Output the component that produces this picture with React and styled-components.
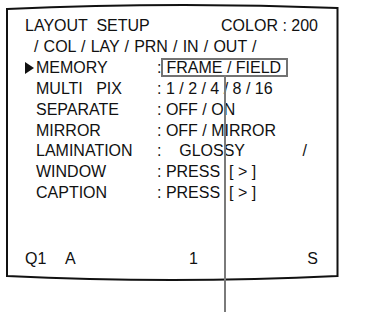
import React from 'react'
import styled, { createGlobalStyle } from 'styled-components'

const GlobalStyle = createGlobalStyle`
  html, body {
    margin: 0;
    padding: 0;
    background: #fff;
  }
`

const Page = styled.div`
  position: relative;
  width: 385px;
  height: 312px;
  overflow: hidden;
  box-sizing: border-box;
  padding: 16px 20px 0 25px;
  font-family: 'Liberation Sans', Arial, sans-serif;
  font-size: 16px;
  line-height: 20.9px;
  color: #111;
`

const Frame = styled.svg`
  position: absolute;
  left: 0;
  top: 0;
  width: 385px;
  height: 312px;
  pointer-events: none;
`

const Screen = styled.div`
  position: relative;
  width: 293px;
`

const Header = styled.div`
  display: flex;
  justify-content: space-between;
  white-space: pre;
`

const Tabs = styled.div`
  white-space: pre;
  padding-left: 9px;
  word-spacing: 0.7px;
`

const Row = styled.div`
  display: grid;
  grid-template-columns: 11px 121px 1fr;
  align-items: baseline;
  white-space: pre;
`

const Cursor = styled.span`
  align-self: center;
  width: 0;
  height: 0;
  border-top: 6px solid transparent;
  border-bottom: 6px solid transparent;
  border-left: 9px solid #111;
  visibility: ${p => (p.$on ? 'visible' : 'hidden')};
`

const Selected = styled.span`
  position: relative;
  display: inline-block;
  line-height: 15px;
  padding: 0 5px 0 3px;
  border: 2px solid #727272;

  &::after {
    content: '';
    position: absolute;
    left: 61px;
    top: 100%;
    width: 2px;
    height: 260px;
    background: #7a7a7a;
  }
`

const Footer = styled.div`
  display: grid;
  grid-template-columns: 40px 124px 1fr auto;
  margin-top: 45px;
`

const rows = [
  { label: 'MEMORY', value: 'FRAME / FIELD', cursor: true, boxed: true },
  { label: 'MULTI   PIX', value: ': 1 / 2 / 4 / 8 / 16' },
  { label: 'SEPARATE', value: ': OFF / ON' },
  { label: 'MIRROR', value: ': OFF / MIRROR' },
  { label: 'LAMINATION', value: ':    GLOSSY             /' },
  { label: 'WINDOW', value: ': PRESS  [ > ]' },
  { label: 'CAPTION', value: ': PRESS  [ > ]' },
]

const App = () => (
  <Page>
    <GlobalStyle />
    <Frame viewBox="0 0 385 312">
      <path
        d="M7 9 Q172 1.5 337.5 8 L337.5 276 Q172 284 7 276 Z"
        fill="none"
        stroke="#111"
        strokeWidth="2"
      />
    </Frame>
    <Screen>
      <Header>
        <span>LAYOUT  SETUP</span>
        <span>COLOR : 200</span>
      </Header>
      <Tabs>/ COL / LAY / PRN / IN / OUT /</Tabs>
      {rows.map((row, i) => (
        <Row key={`menu-row-${i}`}>
          <Cursor $on={row.cursor} />
          <span>{row.label}</span>
          {row.boxed ? (
            <span>
              :<Selected>{row.value}</Selected>
            </span>
          ) : (
            <span>{row.value}</span>
          )}
        </Row>
      ))}
      <Footer>
        <span>Q1</span>
        <span>A</span>
        <span>1</span>
        <span>S</span>
      </Footer>
    </Screen>
  </Page>
)

export default App
